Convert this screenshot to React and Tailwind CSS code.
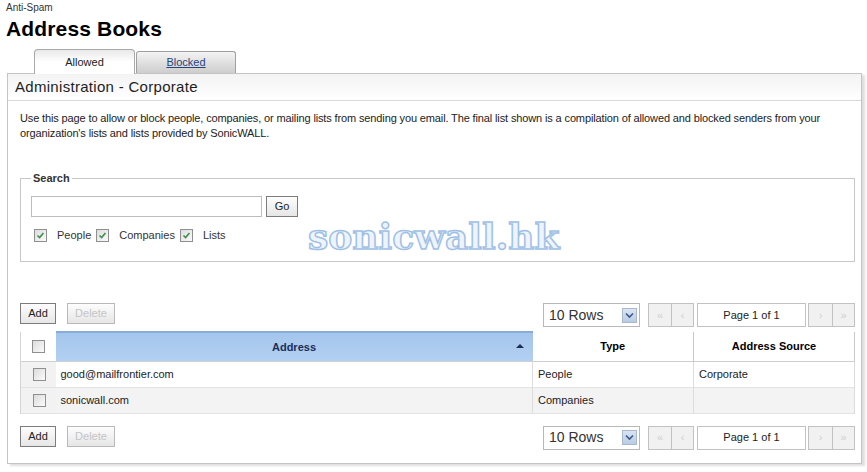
import React from "react";

const font = "font-['Liberation_Sans',Arial,sans-serif]";

// small square checkbox, green tick when checked
function Box({ checked = false }) {
  return (
    <span className="inline-flex h-[13px] w-[13px] shrink-0 items-center justify-center border border-[#8f8f8f] bg-gradient-to-br from-[#dcdcdc] to-[#fbfbfb]">
      {checked && (
        <svg width="9" height="9" viewBox="0 0 9 9">
          <path d="M1.5 4.5 L3.6 6.6 L7.5 2" fill="none" stroke="#3f8f4f" strokeWidth="1.6" />
        </svg>
      )}
    </span>
  );
}

function Btn({ children, disabled = false, className = "" }) {
  return (
    <div
      className={`flex h-[21px] items-center justify-center border bg-gradient-to-b from-[#fdfdfd] to-[#e6e6e6] text-[11px] ${
        disabled ? "border-[#b9b9b9] text-[#c4c4c4]" : "border-[#7c7c7c] text-[#222]"
      } ${className}`}
    >
      {children}
    </div>
  );
}

function Pager() {
  return (
    <div className="flex items-start">
      <div className="flex h-[24px] w-[97px] items-center justify-between border border-[#b8b8b8] bg-white pl-[5px] pr-[2px]">
        <span className="text-[14px] text-[#333]">10 Rows</span>
        <span className="flex h-[15px] w-[15px] items-center justify-center border border-[#a9b8cf] bg-gradient-to-b from-[#dbe5f2] to-[#b9cbe4]">
          <svg width="9" height="7" viewBox="0 0 9 7">
            <path d="M1 1.5 L4.5 5 L8 1.5" fill="none" stroke="#3b5a8a" strokeWidth="1.6" />
          </svg>
        </span>
      </div>
      <div className="ml-[8px] flex h-[24px] w-[46px] border border-[#c2c2c2] bg-[#f1f1f1] text-[11px] text-[#cfcfcf]">
        <span className="flex w-[23px] items-center justify-center border-r border-[#c2c2c2]">«</span>
        <span className="flex flex-1 items-center justify-center">‹</span>
      </div>
      <div className="ml-[3px] flex h-[24px] w-[109px] items-center justify-center border border-[#c2c2c2] bg-white text-[11px] text-[#222]">
        Page 1 of 1
      </div>
      <div className="ml-[2px] flex h-[24px] w-[47px] border border-[#c2c2c2] bg-[#f1f1f1] text-[11px] text-[#cfcfcf]">
        <span className="flex w-[24px] items-center justify-center border-r border-[#c2c2c2]">›</span>
        <span className="flex flex-1 items-center justify-center">»</span>
      </div>
    </div>
  );
}

function Toolbar() {
  return (
    <div className="flex items-start justify-between">
      <div className="flex gap-[11px]">
        <Btn className="w-[36px]">Add</Btn>
        <Btn disabled className="w-[48px]">Delete</Btn>
      </div>
      <Pager />
    </div>
  );
}

const rows = [
  { address: "good@mailfrontier.com", type: "People", source: "Corporate" },
  { address: "sonicwall.com", type: "Companies", source: "" },
];

export default function App() {
  return (
    <div className={`h-[472px] w-[867px] overflow-hidden bg-white text-[#222] ${font}`}>
      <div className="pl-[6px] pt-[2px] text-[10px] leading-[12px] text-[#333]">Anti-Spam</div>
      <div className="pl-[6px] pt-[3px] text-[21px] font-bold leading-[24px] tracking-[0.15px] text-black">Address Books</div>

      {/* tabs */}
      <div className="mt-[8px] flex items-end pl-[34px]">
        <div className="relative z-10 -mb-px flex h-[25px] w-[101px] items-center justify-center rounded-t-[4px] border border-b-0 border-[#a9a9a9] bg-gradient-to-b from-[#e9e9e9] via-white to-white text-[11px]">
          Allowed
        </div>
        <div className="ml-[1px] flex h-[22px] w-[100px] items-center justify-center rounded-t-[3px] border border-b-0 border-[#a0a0a0] bg-gradient-to-b from-[#f4f4f4] to-[#cdcdcd] text-[11px] text-[#23457d] underline">
          Blocked
        </div>
      </div>

      {/* panel */}
      <div className="relative ml-[7px] h-[391px] w-[855px] border border-[#c4c4c4] shadow-[3px_2px_2px_rgba(0,0,0,0.13)]">
        <div className="flex h-[27px] items-center border-b border-[#d9d9d9] bg-gradient-to-b from-[#f3f3f3] to-white pl-[7px] text-[15px] tracking-[0.3px] text-[#1e1e1e]">
          Administration - Corporate
        </div>

        <div className="px-[6px] pl-[12px]">
          <p className="pt-[10px] text-[11px] leading-[15px] tracking-[-0.13px] text-[#222]">
            Use this page to allow or block people, companies, or mailing lists from sending you email. The final list shown is a compilation of allowed and blocked senders from your
            <br />
            organization's lists and lists provided by SonicWALL.
          </p>

          <fieldset className="mt-[30px] border border-[#c8c8c8] px-[10px] pb-[19px] pt-[11px]">
            <legend className="px-[2px] text-[11px] font-bold leading-[14px] text-[#333]">Search</legend>
            <div className="flex gap-[4px]">
              <div className="h-[21px] w-[231px] border border-[#bdbdbd] bg-white" />
              <Btn className="w-[32px]">Go</Btn>
            </div>
            <div className="mt-[12px] flex items-center pl-[3px] text-[11px] leading-[13px] text-[#333]">
              <Box checked />
              <span className="ml-[10px] mr-[5px]">People</span>
              <Box checked />
              <span className="ml-[10px] mr-[5px]">Companies</span>
              <Box checked />
              <span className="ml-[10px]">Lists</span>
            </div>
          </fieldset>

          <div className="mt-[41px]">
            <Toolbar />
          </div>

          <table className="mt-[4px] w-[835px] border-collapse text-[11px]">
            <thead>
              <tr className="h-[29px] border-b border-[#cfcfcf]">
                <th className="w-[35px] border-l border-[#d4d4d4] bg-white">
                  <div className="flex justify-center">
                    <Box />
                  </div>
                </th>
                <th className="relative w-[477px] border-t-2 border-[#87acd9] bg-gradient-to-b from-[#a4c5ec] to-[#b2d0f2] font-bold text-[#1b2f58]">
                  Address
                  <span className="absolute right-[9px] top-[11px] h-0 w-0 border-x-[4px] border-b-[4px] border-x-transparent border-b-[#1b2f58]" />
                </th>
                <th className="w-[161px] border-r border-[#c9c9c9] bg-white font-bold text-black">Type</th>
                <th className="border-r border-[#c9c9c9] bg-white font-bold text-black">Address Source</th>
              </tr>
            </thead>
            <tbody>
              {rows.map((r, i) => (
                <tr key={r.address} className={`h-[26px] border-b border-[#e3e3e3] ${i % 2 ? "bg-[#f3f3f3]" : "bg-white"}`}>
                  <td className="border-l border-[#d4d4d4] bg-[#f2f2f2]">
                    <div className="flex justify-center pl-[3px]">
                      <Box />
                    </div>
                  </td>
                  <td className="border-r border-[#dcdcdc] pl-[5px] text-[#222]">{r.address}</td>
                  <td className="border-r border-[#dcdcdc] pl-[5px] text-[#222]">{r.type}</td>
                  <td className="border-r border-[#dcdcdc] pl-[5px] text-[#222]">{r.source}</td>
                </tr>
              ))}
            </tbody>
          </table>

          <div className="mt-[12px]">
            <Toolbar />
          </div>
        </div>

        {/* watermark over the page */}
        <div className="pointer-events-none absolute left-[300px] top-[142px] font-['DejaVu_Serif',serif] text-[36px] font-bold leading-[40px] text-[#eef4fc] [-webkit-text-stroke:1.5px_#9fc0e6]">
          sonicwall.hk
        </div>
      </div>
    </div>
  );
}
